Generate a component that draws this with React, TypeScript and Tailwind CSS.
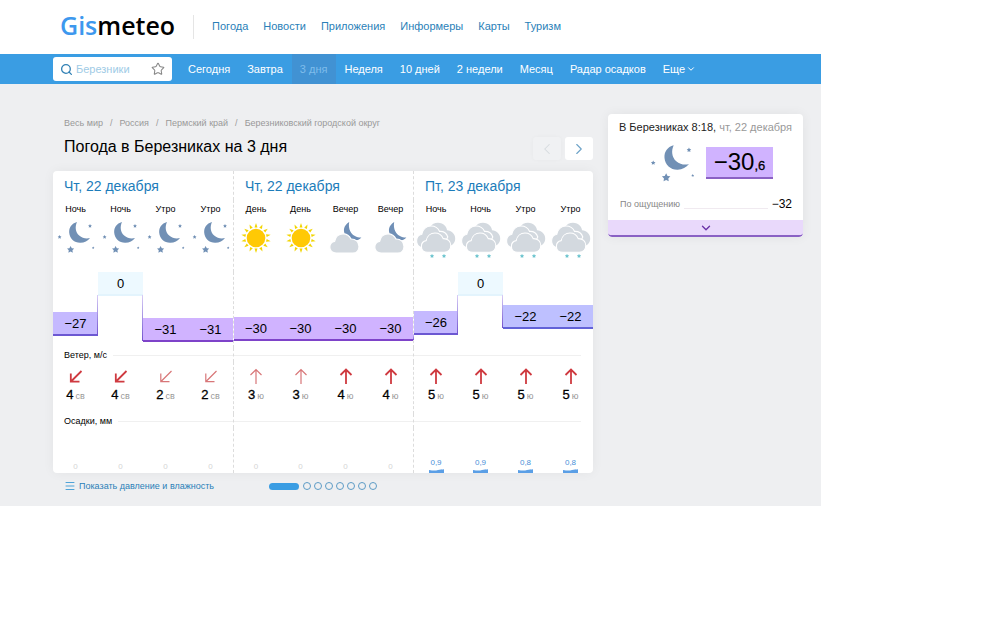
import { useState } from 'react'
import { ChevronDown, ChevronLeft, ChevronRight, Menu, Search, Star } from 'lucide-react'

const siteLinks = ['Погода', 'Новости', 'Приложения', 'Информеры', 'Карты', 'Туризм']
const periods = ['Сегодня', 'Завтра', '3 дня', 'Неделя', '10 дней', '2 недели', 'Месяц', 'Радар осадков']
const crumbs = ['Весь мир', 'Россия', 'Пермский край', 'Березниковский городской округ']
const days = ['Чт, 22 декабря', 'Чт, 22 декабря', 'Пт, 23 декабря']

type Slot = {
  time: string
  icon: 'moon' | 'sun' | 'cloudMoon' | 'snow'
  temp: number
  wind: number
  dir: string
  rain: string
}

const slots: Slot[] = [
  { time: 'Ночь', icon: 'moon', temp: -27, wind: 4, dir: 'св', rain: '0' },
  { time: 'Ночь', icon: 'moon', temp: 0, wind: 4, dir: 'св', rain: '0' },
  { time: 'Утро', icon: 'moon', temp: -31, wind: 2, dir: 'св', rain: '0' },
  { time: 'Утро', icon: 'moon', temp: -31, wind: 2, dir: 'св', rain: '0' },
  { time: 'День', icon: 'sun', temp: -30, wind: 3, dir: 'ю', rain: '0' },
  { time: 'День', icon: 'sun', temp: -30, wind: 3, dir: 'ю', rain: '0' },
  { time: 'Вечер', icon: 'cloudMoon', temp: -30, wind: 4, dir: 'ю', rain: '0' },
  { time: 'Вечер', icon: 'cloudMoon', temp: -30, wind: 4, dir: 'ю', rain: '0' },
  { time: 'Ночь', icon: 'snow', temp: -26, wind: 5, dir: 'ю', rain: '0,9' },
  { time: 'Ночь', icon: 'snow', temp: 0, wind: 5, dir: 'ю', rain: '0,9' },
  { time: 'Утро', icon: 'snow', temp: -22, wind: 5, dir: 'ю', rain: '0,8' },
  { time: 'Утро', icon: 'snow', temp: -22, wind: 5, dir: 'ю', rain: '0,8' },
]

const STAR = 'M0 -4 L1.3 -1.5 L3.9 -1.2 L2 0.7 L2.4 3.4 L0 2.2 L-2.4 3.4 L-2 0.7 L-3.9 -1.2 L-1.3 -1.5 Z'

function Moon({ className }: { className: string }) {
  return (
    <svg viewBox="0 0 38 34" className={className} fill="#7190b5" aria-hidden="true">
      <path d="M20 1 C14.6 2.4 11.8 6.6 12.2 11.8 C12.7 17.8 17.6 22 23.4 21.8 C27.4 21.6 30.8 20 33 17 C29.6 18 25.4 17.4 22.2 14.6 C18.4 11.2 17.8 5.8 20 1 Z" />
      <path d={STAR} transform="translate(2.6 16) scale(.5)" />
      <path d={STAR} transform="translate(33 5) scale(.5)" />
      <path d={STAR} transform="translate(13.6 28.6) scale(.92)" />
      <path d={STAR} transform="translate(36.2 26.8) scale(.32)" />
    </svg>
  )
}

function Sun() {
  const rays = Array.from({ length: 14 }, (_, i) => (i * 360) / 14)
  return (
    <svg viewBox="0 0 38 38" className="mx-auto h-[38px] w-[38px]" aria-hidden="true">
      {rays.map((a) => (
        <path key={a} d="M19 4 L20.5 8.4 H17.5 Z" fill="#f2d500" transform={`rotate(${a} 19 19)`} />
      ))}
      <circle cx="19" cy="19" r="9.3" fill="#ffc905" />
    </svg>
  )
}

function CloudMoon() {
  return (
    <svg viewBox="0 0 38 38" className="mx-auto h-[38px] w-[38px]" aria-hidden="true">
      <path d="M22.2 3 C18 5.6 16 9.6 17.4 14 C19 19 23 21.4 27.6 21.6 C30.4 21.6 32.8 20.6 34.4 18.6 C30.4 18.8 25.6 16.8 23.4 12.6 C21.8 9.4 21.6 6 22.2 3 Z" fill="#6f8fb6" />
      <path
        d="M9.2 34 C5.4 34 2.8 31.6 2.8 28.2 C2.8 25.2 4.8 22.8 7.6 22.3 C8.4 17.8 11.8 14.8 16 14.8 C19.6 14.8 22.6 16.8 24 20 C28.4 19.8 32 22.8 32 27.4 C32 31.4 29.4 34 25.6 34 Z"
        fill="#d3d9df"
        stroke="#fff"
        strokeWidth="1.2"
      />
    </svg>
  )
}

function Snow() {
  return (
    <svg viewBox="0 0 40 38" className="mx-auto h-[38px] w-10" aria-hidden="true">
      <path d="M14 8 C17 3 25 2.2 29.2 7 C30.2 8.2 30.8 9.8 31 11.2 C35.4 11.6 39.2 15 39.2 19.4 C39.2 23.2 37 26 33.6 26.8 L12 24 Z" fill="#d3d9df" />
      <path
        d="M6.4 29 C3 28.2 .6 25.4 .6 22 C.6 18.2 2.8 15.8 5.8 15.2 C6.4 10.4 10.2 7 15 7 C18.8 7 22 9 23.6 12.4 C27.4 12.2 30.6 14.4 31.8 18 L26 30 Z"
        fill="#d3d9df"
        stroke="#fff"
        strokeWidth="1.1"
      />
      <path
        d="M11.8 33.2 C7.8 33.2 5.4 30.8 5.4 27.4 C5.4 24.2 7.4 22 10.2 21.6 C11 17 14.6 14 19 14 C22.6 14 25.8 16.2 27.2 19.6 C31.6 19.4 34.8 22.4 34.8 26.6 C34.8 30.6 32 33.2 28.2 33.2 Z"
        fill="#d3d9df"
        stroke="#fff"
        strokeWidth="1.1"
      />
    </svg>
  )
}

function WeatherIcon({ icon }: { icon: Slot['icon'] }) {
  if (icon === 'moon') return <Moon className="mx-auto h-[34px] w-[38px]" />
  if (icon === 'sun') return <Sun />
  if (icon === 'cloudMoon') return <CloudMoon />
  return (
    <div>
      <Snow />
      <svg viewBox="0 0 20 6" className="mx-auto -mt-1 h-[6px] w-5" fill="#6cc4ce" aria-hidden="true">
        <path d={STAR} transform="translate(6 3) scale(.55)" />
        <path d={STAR} transform="translate(18 3) scale(.55)" />
      </svg>
    </div>
  )
}

function WindArrow({ wind, dir }: { wind: number; dir: string }) {
  const color = wind > 3 ? '#cf3a40' : '#d87678'
  const width = wind > 3 ? 1.8 : 1.2
  return (
    <svg viewBox="0 0 16 18" className="mx-auto h-[18px] w-4" fill="none" stroke={color} strokeWidth={width} aria-hidden="true">
      {dir === 'ю' ? <path d="M8 17 V3 M2.5 8 L8 2.6 L13.5 8" /> : <path d="M13.5 4 L3 14.5 M2.8 6.5 V14.6 H11.5" />}
    </svg>
  )
}

// Distance of a temperature step below the zero mark
const drop = (temp: number) => Math.floor(-temp * 1.5)

const stepStyle = (temp: number) => {
  if (temp === 0) return 'bg-[#edf9ff] border-[#e3f4fd]'
  if (temp > -25) return 'bg-[#bec0ff] border-[#6262d8]'
  if (temp > -28) return 'bg-[#c5b9ff] border-[#6c58d2]'
  return 'bg-[#d0b3ff] border-[#7e43c9]'
}

// Dashed line in front of the second and third day
const dayLine = (start: boolean) => (start ? 'border-l border-dashed border-[#dcdcdc]' : '')

function SectionRow({ label, height }: { label: string; height: string }) {
  return (
    <tr className={height}>
      <th colSpan={4} scope="row" className="p-0 pl-[11px] font-normal">
        <div className="flex items-center gap-1.5">
          <span className="text-[9px] leading-3">{label}</span>
          <span className="h-px flex-1 bg-[#f0f0f0]" />
        </div>
      </th>
      <td colSpan={4} className={`p-0 ${dayLine(true)}`}>
        <div className="h-px bg-[#f0f0f0]" />
      </td>
      <td colSpan={4} className={`p-0 pr-3 ${dayLine(true)}`}>
        <div className="h-px bg-[#f0f0f0]" />
      </td>
    </tr>
  )
}

function Forecast() {
  return (
    <div className="overflow-hidden rounded bg-white shadow-[0_0_12px_rgba(0,0,0,0.05)]">
      <table className="w-full table-fixed border-separate border-spacing-0 text-center">
        <thead>
          <tr className="h-[29px]">
            {days.map((day, i) => (
              <th key={i} colSpan={4} scope="colgroup" className={`p-0 pl-[11px] text-left text-sm leading-4 font-normal text-[#1c7cba] ${dayLine(i > 0)}`}>
                {day}
              </th>
            ))}
          </tr>
          <tr className="h-[17px]">
            {slots.map((s, i) => (
              <th key={i} scope="col" className={`p-0 text-[9px] leading-3 font-normal ${dayLine(i === 4 || i === 8)}`}>
                {s.time}
              </th>
            ))}
          </tr>
        </thead>
        <tbody>
          <tr className="h-[55px]">
            {slots.map((s, i) => (
              <td key={i} className={`p-0 align-top ${dayLine(i === 4 || i === 8)}`}>
                <div className={s.icon === 'moon' ? 'pt-1' : 'pt-0.5'}>
                  <WeatherIcon icon={s.icon} />
                </div>
              </td>
            ))}
          </tr>
          <tr className="h-[76px]">
            {slots.map((s, i) => {
              const prev = i > 0 ? slots[i - 1].temp : s.temp
              const top = Math.min(drop(prev), drop(s.temp)) + 23
              return (
                <td key={i} className={`relative p-0 align-top ${dayLine(i === 4 || i === 8)}`}>
                  <div className={`h-6 border-b-2 text-[13px] leading-6 ${stepStyle(s.temp)}`} style={{ marginTop: drop(s.temp) }}>
                    {s.temp < 0 ? `−${-s.temp}` : s.temp}
                  </div>
                  {prev !== s.temp && (
                    <span
                      className="absolute -left-px w-px bg-linear-to-b from-[#d9cdf5] to-[#7350cd]"
                      style={{ top, height: Math.abs(drop(prev) - drop(s.temp)) }}
                    />
                  )}
                </td>
              )
            })}
          </tr>
          <SectionRow label="Ветер, м/с" height="h-[14px]" />
          <tr className="h-[52px]">
            {slots.map((s, i) => (
              <td key={i} className={`p-0 align-top ${dayLine(i === 4 || i === 8)}`}>
                <div className="pt-[5px]">
                  <WindArrow wind={s.wind} dir={s.dir} />
                </div>
                <div className="pt-px leading-4">
                  <span className="text-[13px] [-webkit-text-stroke:0.3px]">{s.wind}</span>
                  <span className="ml-0.5 text-[9px] text-[#999]">{s.dir}</span>
                </div>
              </td>
            ))}
          </tr>
          <SectionRow label="Осадки, мм" height="h-[14px]" />
          <tr className="h-[45px]">
            {slots.map((s, i) => (
              <td key={i} className={`p-0 align-bottom text-[8px] leading-[10px] ${dayLine(i === 4 || i === 8)}`}>
                {s.rain === '0' ? (
                  <div className="pb-px text-[#d5d5d5]">0</div>
                ) : (
                  <div className="text-[#4a90d9]">
                    {s.rain}
                    <svg viewBox="0 0 15 4" className="mx-auto mt-px h-1 w-[15px]" fill="#5b9fe6" aria-hidden="true">
                      <path d="M0 1 C4 1.6 6 2 9 1 C11 .3 13 .6 15 .2 V4 H0 Z" />
                    </svg>
                  </div>
                )}
              </td>
            ))}
          </tr>
        </tbody>
      </table>
    </div>
  )
}

function Now() {
  return (
    <aside className="mt-[30px] w-[195px] shrink-0 self-start overflow-hidden rounded bg-white shadow-[0_0_12px_rgba(0,0,0,0.06)]">
      <h2 className="pt-[7px] text-center text-[11px] leading-3 whitespace-nowrap text-[#222]">
        В Березниках 8:18, <span className="text-[#999]">чт, 22 декабря</span>
      </h2>
      <div className="flex items-start pt-3 pl-[42px]">
        <Moon className="-mt-px h-[40px] w-[45px]" />
        <div className="mt-0.5 ml-[11px] h-8 w-[67px] border-b-2 border-[#8a61c4] bg-[#d0b3ff] text-center leading-[30px]">
          <span className="text-2xl leading-[30px]">−30</span>
          <span className="text-[13px] [-webkit-text-stroke:0.3px]">,6</span>
        </div>
      </div>
      <dl className="flex items-center pt-3 pr-[11px] pl-3">
        <dt className="text-[9px] leading-4 text-[#888]">По ощущению</dt>
        <dd className="flex flex-1 items-center">
          <span className="mx-1 mt-2 h-px flex-1 bg-[#f0eaf0]" />
          <span className="text-xs">−32</span>
        </dd>
      </dl>
      <button type="button" aria-label="Подробнее" className="mt-2 flex h-[17px] w-full items-center justify-center rounded-b border-b-2 border-[#8a61c4] bg-[#e9d9fb]">
        <ChevronDown className="h-3.5 w-3.5 text-[#6c35a8]" strokeWidth={2.4} />
      </button>
    </aside>
  )
}

function App() {
  const [city, setCity] = useState('')
  const [page, setPage] = useState(0)

  return (
    <div className="min-h-screen bg-white pr-[187px] font-['Liberation_Sans',Arial,sans-serif] text-black">
      <header className="flex h-[54px] items-center pl-[60px]">
        <a href="#" className="pb-1 font-['Open_Sans',sans-serif] text-[25px] leading-8 font-semibold">
          <span className="text-[#3d98ee]">Gis</span>meteo
        </a>
        <span className="mr-[18px] ml-[18px] h-6 w-px bg-[#e5e5e5]" />
        <nav className="flex gap-[15px] pb-0.5 text-[11px] leading-4 whitespace-nowrap text-[#2a7fb8]">
          {siteLinks.map((l) => (
            <a key={l} href="#">
              {l}
            </a>
          ))}
        </nav>
      </header>

      <div className="flex h-[30px] items-center bg-[#3a9de3] pl-[53px]">
        <form className="mr-2 flex h-6 w-[119px] items-center rounded-[3px] bg-white px-[7px]" onSubmit={(e) => e.preventDefault()}>
          <Search className="h-[13px] w-[13px] shrink-0 text-[#3181b5]" strokeWidth={2.4} />
          <input
            aria-label="Поиск города"
            placeholder="Березники"
            value={city}
            onChange={(e) => setCity(e.target.value)}
            className="ml-[3px] w-full min-w-0 text-[11px] leading-4 outline-none placeholder:text-[#a0cbe6]"
          />
          <button type="button" aria-label="В избранное">
            <Star className="h-3.5 w-3.5 text-[#888]" strokeWidth={1.8} />
          </button>
        </form>
        <nav className="flex self-stretch text-[11px] leading-[30px] whitespace-nowrap text-white">
          {periods.map((p) => (
            <a key={p} href="#" className={p === '3 дня' ? 'bg-[#4192d3] pr-[9px] pl-2 text-[#7fbdeb]' : 'pr-[9px] pl-2'}>
              {p}
            </a>
          ))}
          <button type="button" className="flex items-center gap-px px-2">
            Еще <ChevronDown className="h-2.5 w-2.5" strokeWidth={2.4} />
          </button>
        </nav>
      </div>

      <div className="flex gap-[15px] bg-[#eeeff1] pr-[18px] pb-3.5 pl-[53px]">
        <main className="min-w-0 flex-1">
          <nav aria-label="Путь" className="mt-[33px] ml-[11px] flex gap-[7px] text-[9px] leading-3 whitespace-nowrap text-[#999]">
            {crumbs.map((c, i) => (
              <span key={c} className="flex gap-[7px]">
                {i > 0 && <span>/</span>}
                <a href="#">{c}</a>
              </span>
            ))}
          </nav>
          <div className="mt-2 mb-[11px] flex h-[23px] items-center gap-1">
            <h1 className="ml-[11px] flex-1 pb-1 text-base leading-5">Погода в Березниках на 3 дня</h1>
            <button type="button" disabled aria-label="Назад" className="flex h-[23px] w-7 items-center justify-center rounded-[3px] bg-[#f0f1f3] text-[#d5dade] shadow-[0_0_4px_rgba(0,0,0,0.03)]">
              <ChevronLeft className="h-[18px] w-[18px]" strokeWidth={1.4} />
            </button>
            <button type="button" aria-label="Вперед" className="flex h-[23px] w-7 items-center justify-center rounded-[3px] bg-white text-[#6ea3c8]">
              <ChevronRight className="h-[18px] w-[18px]" strokeWidth={1.5} />
            </button>
          </div>
          <Forecast />
          <div className="mt-[7px] flex h-3 items-center pl-[11px]">
            <a href="#" className="flex w-[205px] items-center gap-[3px] text-[9px] leading-3 whitespace-nowrap text-[#2a7fb8]">
              <Menu className="h-3 w-3 text-[#4fa3d8]" />
              Показать давление и влажность
            </a>
            <div className="flex items-center gap-[3px]">
              {Array.from({ length: 8 }, (_, i) => (
                <button
                  key={i}
                  type="button"
                  aria-label={`Страница ${i + 1}`}
                  onClick={() => setPage(i)}
                  className={i === page ? 'mr-px h-[7px] w-[30px] rounded-full bg-[#3a9de3]' : 'h-2 w-2 rounded-full border border-[#5d9cc6]'}
                />
              ))}
            </div>
          </div>
        </main>
        <Now />
      </div>
    </div>
  )
}

export default App
